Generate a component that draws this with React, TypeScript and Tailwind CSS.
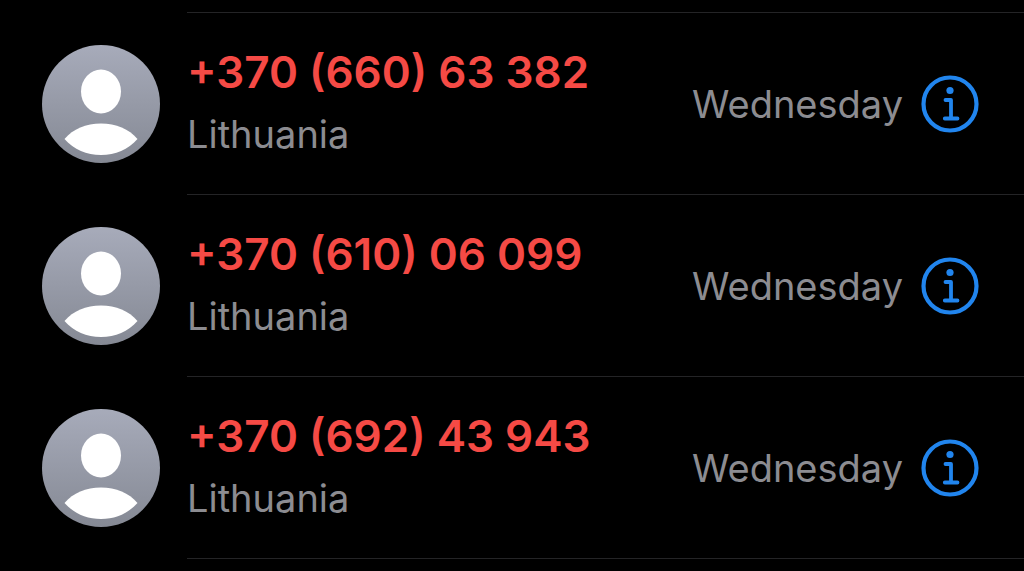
interface Call {
  id: number;
  number: string;
  country: string;
  day: string;
}

const calls: Call[] = [
  { id: 1, number: "+370 (660) 63 382", country: "Lithuania", day: "Wednesday" },
  { id: 2, number: "+370 (610) 06 099", country: "Lithuania", day: "Wednesday" },
  { id: 3, number: "+370 (692) 43 943", country: "Lithuania", day: "Wednesday" },
];

function Avatar() {
  return (
    <div className="mt-[33px] size-[118px] shrink-0 overflow-hidden rounded-full bg-linear-to-b from-[#a7abba] to-[#858994]">
      <svg viewBox="0 0 118 118" className="size-full" fill="#fff" aria-hidden="true">
        <ellipse cx="59" cy="46.5" rx="20" ry="22" />
        <path d="M22.500 94C31 84 44 78.500 59 78.500s28 5.500 36.500 15.500C86 104.500 73.500 110 59 110S32 104.500 22.500 94z" />
      </svg>
    </div>
  );
}

function InfoIcon() {
  return (
    <svg
      viewBox="0 0 58 58"
      className="size-[58px]"
      fill="none"
      stroke="currentColor"
      strokeLinecap="round"
      strokeLinejoin="round"
      aria-hidden="true"
    >
      <circle cx="29" cy="29" r="26.5" strokeWidth="4.2" />
      <circle cx="29" cy="15.5" r="3.6" fill="currentColor" stroke="none" />
      <path d="M24.500 25h5.500v18.500M23.800 43.500h12.700" strokeWidth="3.800" />
    </svg>
  );
}

function CallRow({ call }: { call: Call }) {
  return (
    <li className="group flex items-start pl-[42px]">
      <Avatar />
      <div className="ml-[27px] flex min-w-0 flex-1 items-center border-t border-[#242426] pt-[31px] pr-[45px] pb-[30px] group-last:border-b">
        <div className="min-w-0 flex-1">
          <p className="truncate text-[44px] leading-[56px] font-semibold text-[#f54a45]">{call.number}</p>
          <p className="mt-1 truncate text-[38px] leading-[60px] text-[#8c8c91]">{call.country}</p>
        </div>
        <time className="text-[38px] leading-[60px] text-[#8c8c91]">{call.day}</time>
        <button type="button" aria-label={`Details for ${call.number}`} className="ml-[18px] shrink-0 text-[#2185ee]">
          <InfoIcon />
        </button>
      </div>
    </li>
  );
}

export default function App() {
  return (
    <main className="min-h-screen bg-black pt-3 font-['Inter',sans-serif]">
      <ul>
        {calls.map((call) => (
          <CallRow key={call.id} call={call} />
        ))}
      </ul>
    </main>
  );
}
